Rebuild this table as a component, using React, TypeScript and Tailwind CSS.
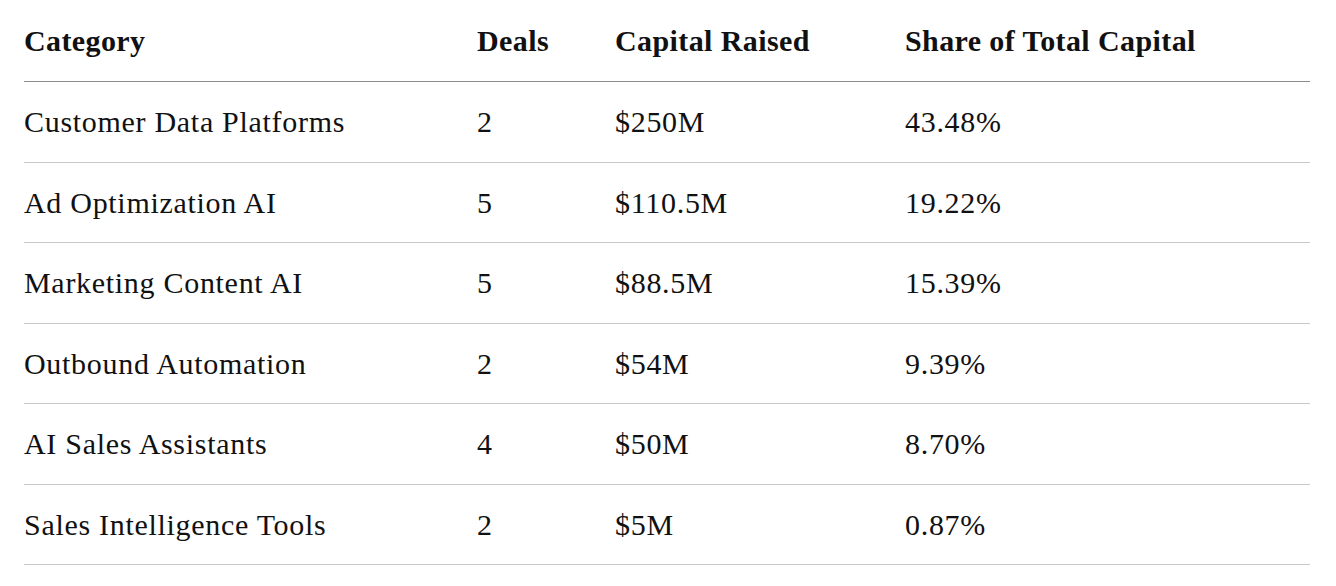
const rows = [
  { category: 'Customer Data Platforms', deals: '2', capital: '$250M', share: '43.48%' },
  { category: 'Ad Optimization AI', deals: '5', capital: '$110.5M', share: '19.22%' },
  { category: 'Marketing Content AI', deals: '5', capital: '$88.5M', share: '15.39%' },
  { category: 'Outbound Automation', deals: '2', capital: '$54M', share: '9.39%' },
  { category: 'AI Sales Assistants', deals: '4', capital: '$50M', share: '8.70%' },
  { category: 'Sales Intelligence Tools', deals: '2', capital: '$5M', share: '0.87%' },
];

const cols = 'grid grid-cols-[453px_138px_290px_1fr]';

export default function App() {
  return (
    <div className="min-h-[586px] bg-white pl-[24px] pr-[26px] text-[#111111] [font-family:'Liberation_Serif','Times_New_Roman',serif]">
      <div className={`${cols} h-[82px] items-center border-b border-[#8c8c8c] text-[30px] font-bold tracking-[0.4px]`}>
        <div>Category</div>
        <div>Deals</div>
        <div>Capital Raised</div>
        <div>Share of Total Capital</div>
      </div>
      {rows.map((row) => (
        <div
          key={row.category}
          className={`${cols} h-[80.5px] items-center border-b border-[#c9c9c9] text-[30px] tracking-[0.7px]`}
        >
          <div>{row.category}</div>
          <div>{row.deals}</div>
          <div>{row.capital}</div>
          <div>{row.share}</div>
        </div>
      ))}
    </div>
  );
}
